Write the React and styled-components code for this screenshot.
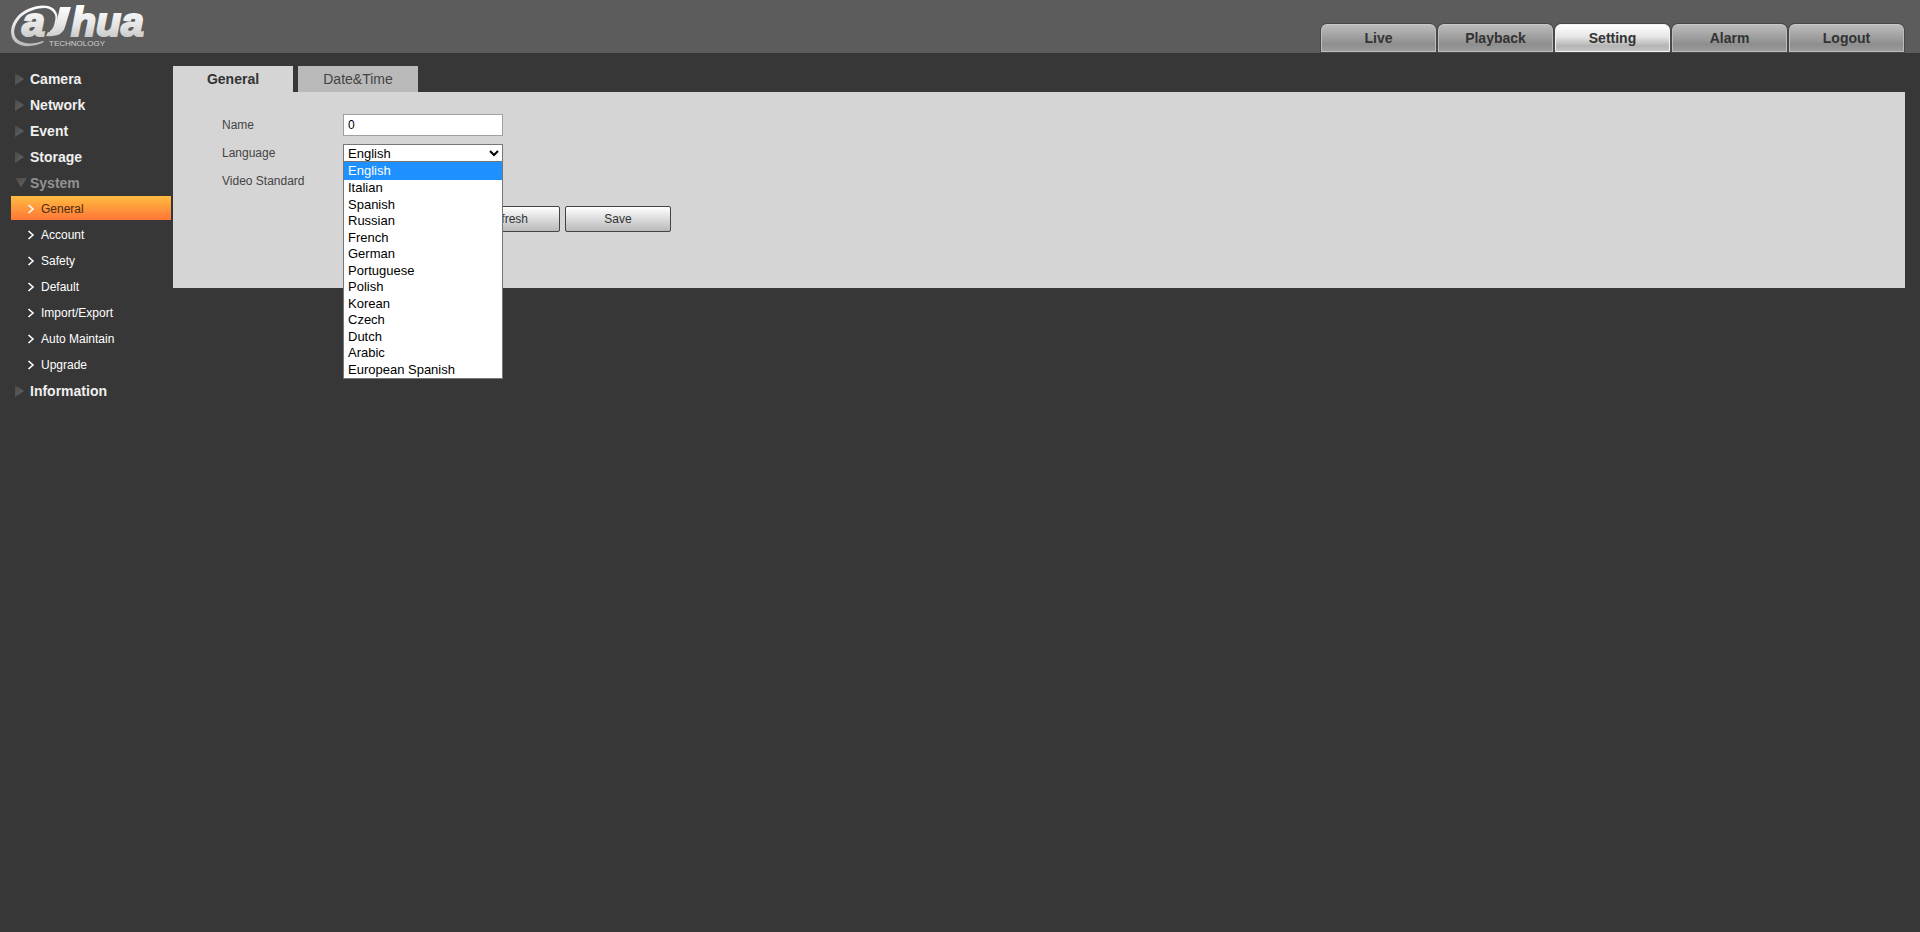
import React, { useState } from 'react';
import styled, { createGlobalStyle, css } from 'styled-components';

const topTabs = ['Live', 'Playback', 'Setting', 'Alarm', 'Logout'];
const systemPages = ['General', 'Account', 'Safety', 'Default', 'Import/Export', 'Auto Maintain', 'Upgrade'];
const menus = [
  { name: 'Camera' },
  { name: 'Network' },
  { name: 'Event' },
  { name: 'Storage' },
  { name: 'System', pages: systemPages },
  { name: 'Information' },
];
const languages = [
  'English', 'Italian', 'Spanish', 'Russian', 'French', 'German', 'Portuguese',
  'Polish', 'Korean', 'Czech', 'Dutch', 'Arabic', 'European Spanish',
];

const GlobalStyle = createGlobalStyle`
  * {
    box-sizing: border-box;
  }
  body {
    margin: 0;
    background: #373737;
    color: #333;
    font: 12px/16px Arial, "Liberation Sans", sans-serif;
  }
  ul {
    margin: 0;
    padding: 0;
    list-style: none;
  }
  a {
    color: inherit;
    text-decoration: none;
  }
  button, input, select {
    font-family: inherit;
  }
`;

const Header = styled.header`
  display: flex;
  justify-content: space-between;
  height: 53px;
  padding: 0 16px 0 8px;
  background: #5c5c5c;
`;

const TopNav = styled.nav`
  display: flex;
  align-items: flex-end;
  gap: 2px;
  padding-bottom: 1px;
`;

const TopTab = styled.a`
  width: 115px;
  height: 28px;
  border: 1px solid #bdbdbd;
  border-top-color: #c8c8c8;
  border-radius: 6px 6px 0 0;
  background: linear-gradient(#bcbcbc, #8e8e8e 75%, #9c9c9c);
  box-shadow: 0 0 0 1px #484848;
  color: #333;
  font-size: 14px;
  font-weight: bold;
  line-height: 26px;
  text-align: center;
  ${(props) => props.$active && css`
    border-color: #f4f4f4;
    background: linear-gradient(#fff, #e6e6e6 45%, #b4b4b4 80%, #c4c4c4);
  `}
`;

const Page = styled.div`
  display: flex;
  gap: 2px;
  padding: 13px 15px 0 11px;
`;

const Sidebar = styled.nav`
  width: 160px;
  flex-shrink: 0;
`;

const MenuLink = styled.a`
  display: flex;
  align-items: center;
  gap: 2px;
  height: 26px;
  padding-left: 4px;
  color: ${(props) => (props.$open ? '#929292' : '#efefef')};
  font-size: 14px;
  font-weight: bold;
`;

const SubLink = styled.a`
  display: flex;
  align-items: center;
  gap: 5px;
  height: 24px;
  margin-bottom: 2px;
  padding: 2px 0 0 16px;
  color: ${(props) => (props.$active ? '#4a2c10' : '#fff')};
  background: ${(props) => (props.$active ? 'linear-gradient(#ffbc40, #ff7637)' : 'none')};
`;

const Content = styled.main`
  flex: 1;
`;

const Tabs = styled.div`
  display: flex;
  gap: 5px;
`;

const Tab = styled.button`
  width: 120px;
  height: 26px;
  padding: 0;
  border: 0;
  background: ${(props) => (props.$active ? '#d5d5d5' : '#b9b9b9')};
  color: ${(props) => (props.$active ? '#333' : '#444')};
  font-size: 14px;
  font-weight: ${(props) => (props.$active ? 'bold' : 'normal')};
`;

const Panel = styled.form`
  height: 196px;
  padding: 19px 0 0 49px;
  background: #d5d5d5;
`;

const Row = styled.div`
  display: flex;
  align-items: center;
  height: 28px;
`;

const Label = styled.label`
  width: 121px;
  color: #444;
`;

const TextInput = styled.input`
  width: 160px;
  height: 22px;
  padding: 0 4px;
  border: 1px solid #a0a0a0;
  background: #fff;
  color: #000;
  font-size: 12px;
  outline: none;
`;

const Picker = styled.div`
  position: relative;
  display: flex;
  width: 160px;
`;

const Select = styled.select`
  width: 100%;
  height: 18px;
  padding: 0;
  border: 1px solid #767676;
  border-radius: 0;
  background-color: #fff;
  color: #000;
  font-size: 13px;
`;

const Options = styled.ul`
  position: absolute;
  top: 100%;
  left: 0;
  right: 0;
  z-index: 1;
  display: grid;
  grid-template-rows: 18px;
  grid-auto-rows: 1fr;
  height: 217px;
  border: 1px solid #767676;
  border-top: 0;
  background: #fff;
`;

const Option = styled.li`
  display: flex;
  align-items: center;
  min-height: 0;
  padding-left: 4px;
  background: ${(props) => (props.$selected ? '#1e90ff' : '#fff')};
  color: ${(props) => (props.$selected ? '#fff' : '#000')};
  font-size: 13px;
  cursor: default;
`;

const Actions = styled.div`
  display: flex;
  gap: 5px;
  padding: 11px 0 0 121px;
`;

const Button = styled.button`
  width: 106px;
  height: 26px;
  padding: 0;
  border: 1px solid #444;
  border-radius: 2px;
  background: linear-gradient(#fff, #b9b9b9);
  color: #333;
  font-size: 12px;
`;

const Logo = () => (
  <svg width="148" height="50" viewBox="0 0 148 50" role="img" aria-label="Dahua Technology">
    <defs>
      <linearGradient id="silver" gradientUnits="userSpaceOnUse" x1="0" y1="5" x2="0" y2="46">
        <stop offset="0" stopColor="#fff" />
        <stop offset="0.5" stopColor="#e4e4e4" />
        <stop offset="1" stopColor="#b8b8b8" />
      </linearGradient>
    </defs>
    <g fill="url(#silver)">
      <path d="M36 42C27 47 14 48 7 42C1 36 2 25 9 17C17 8 31 4 40 6C48 8 51 15 49 22L48 27C47 31 45 33 41 34L42 31C45 29 46 26 47 21C49 15 45 9 37 8C29 8 19 11 12 18C6 25 4 34 9 39C14 44 25 45 35 41Z" />
      <path d="M52 7H63L57 27C55 34 49 37 38 36L40 32C45 33 47 30 48 25Z" />
      <g
        fontFamily="Liberation Sans, Arial, sans-serif"
        fontWeight="bold"
        fontStyle="italic"
        fontSize="41"
        stroke="url(#silver)"
        strokeWidth="2.2"
      >
        <text x="14" y="36">a</text>
        <text x="63" y="36">hua</text>
      </g>
      <text x="41" y="46" fill="#cfcfcf" fontFamily="Liberation Sans, Arial, sans-serif" fontSize="8">TECHNOLOGY</text>
    </g>
  </svg>
);

const MenuArrow = ({ open }) => (
  <svg width="13" height="13" viewBox="0 0 13 13" aria-hidden="true">
    <defs>
      <linearGradient id="arrow" x1="0" y1="0" x2="1" y2="1">
        <stop offset="0" stopColor="#484848" />
        <stop offset="1" stopColor="#666" />
      </linearGradient>
    </defs>
    <path d={open ? 'M0 1H12L6 10Z' : 'M0 0L9 6L0 12Z'} fill="url(#arrow)" />
  </svg>
);

const Chevron = () => (
  <svg width="9" height="10" viewBox="0 0 9 10" fill="none" stroke="#fff" strokeWidth="1.6" aria-hidden="true">
    <path d="M1.5 1L6 5L1.5 9" />
  </svg>
);

const App = () => {
  const [name, setName] = useState('0');
  const [language, setLanguage] = useState('English');

  return (
    <>
      <GlobalStyle />
      <Header>
        <Logo />
        <TopNav>
          {topTabs.map((tab) => (
            <TopTab key={tab} href="#" $active={tab === 'Setting'}>{tab}</TopTab>
          ))}
        </TopNav>
      </Header>
      <Page>
        <Sidebar>
          <ul>
            {menus.map((menu) => (
              <li key={menu.name}>
                <MenuLink href="#" $open={!!menu.pages}>
                  <MenuArrow open={!!menu.pages} />
                  {menu.name}
                </MenuLink>
                {menu.pages && (
                  <ul>
                    {menu.pages.map((page) => (
                      <li key={page}>
                        <SubLink href="#" $active={page === 'General'}>
                          <Chevron />
                          {page}
                        </SubLink>
                      </li>
                    ))}
                  </ul>
                )}
              </li>
            ))}
          </ul>
        </Sidebar>
        <Content>
          <Tabs>
            <Tab type="button" $active>General</Tab>
            <Tab type="button">Date&amp;Time</Tab>
          </Tabs>
          <Panel onSubmit={(e) => e.preventDefault()}>
            <Row>
              <Label htmlFor="name">Name</Label>
              <TextInput id="name" value={name} onChange={(e) => setName(e.target.value)} />
            </Row>
            <Row>
              <Label htmlFor="language">Language</Label>
              <Picker>
                <Select id="language" value={language} onChange={(e) => setLanguage(e.target.value)}>
                  {languages.map((item) => <option key={item}>{item}</option>)}
                </Select>
                <Options role="listbox" aria-label="Language">
                  {languages.map((item) => (
                    <Option
                      key={item}
                      role="option"
                      aria-selected={item === language}
                      $selected={item === language}
                      onClick={() => setLanguage(item)}
                    >
                      {item}
                    </Option>
                  ))}
                </Options>
              </Picker>
            </Row>
            <Row>
              <Label as="span">Video Standard</Label>
            </Row>
            <Actions>
              <Button type="button">Default</Button>
              <Button type="button">Refresh</Button>
              <Button type="submit">Save</Button>
            </Actions>
          </Panel>
        </Content>
      </Page>
    </>
  );
};

export default App;
